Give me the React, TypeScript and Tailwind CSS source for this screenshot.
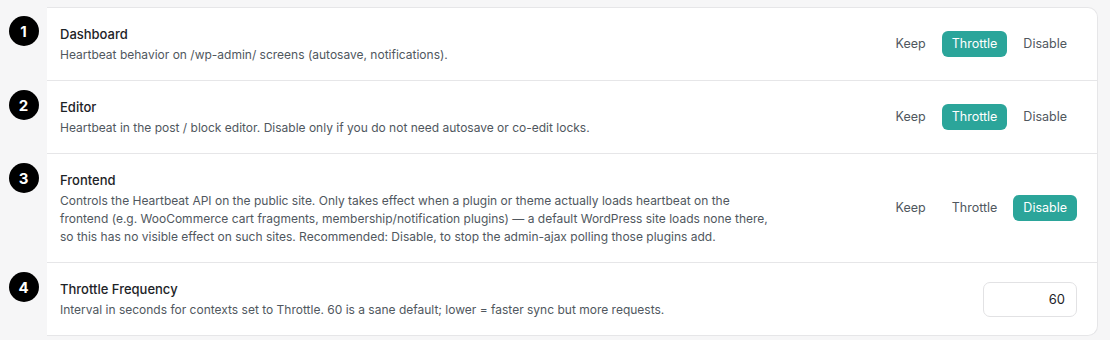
const rows = [
  {
    n: 1,
    title: 'Dashboard',
    desc: 'Heartbeat behavior on /wp-admin/ screens (autosave, notifications).',
    value: 'Throttle',
  },
  {
    n: 2,
    title: 'Editor',
    desc: 'Heartbeat in the post / block editor. Disable only if you do not need autosave or co-edit locks.',
    value: 'Throttle',
  },
  {
    n: 3,
    title: 'Frontend',
    desc: 'Controls the Heartbeat API on the public site. Only takes effect when a plugin or theme actually loads heartbeat on the frontend (e.g. WooCommerce cart fragments, membership/notification plugins) — a default WordPress site loads none there, so this has no visible effect on such sites. Recommended: Disable, to stop the admin-ajax polling those plugins add.',
    value: 'Disable',
  },
];

const options = ['Keep', 'Throttle', 'Disable'];

const Marker: React.FC<{ n: number }> = ({ n }) => (
  <div className="w-[47px] shrink-0 flex justify-center pt-[9px]">
    <div className="w-[30px] h-[30px] rounded-full bg-black text-white flex items-center justify-center text-[15px] font-bold leading-none">
      {n}
    </div>
  </div>
);

const Segmented: React.FC<{ value: string }> = ({ value }) => (
  <div className="flex items-center gap-[6px] shrink-0">
    {options.map((o) => (
      <button
        key={o}
        className={
          o === value
            ? 'h-[26px] px-[10px] rounded-[6px] bg-[#2ba59a] text-white text-[12.5px]'
            : 'h-[26px] px-[10px] rounded-[6px] text-[#50575e] text-[12.5px]'
        }
      >
        {o}
      </button>
    ))}
  </div>
);

export default function App() {
  return (
    <div
      className="w-[1110px] h-[340px] bg-[#f6f6f7] pt-[7px] pr-[12px]"
      style={{ fontFamily: 'Inter, "Noto Sans", sans-serif' }}
    >
      {rows.map((r, i) => (
        <div key={r.n} className="flex">
          <Marker n={r.n} />
          <div
            className={
              'flex-1 flex items-center bg-white border-r border-b border-[#e6e6e8] pl-[13px] pr-[20px] py-[16px] ' +
              (i === 0 ? 'border-t rounded-tr-[10px]' : '')
            }
          >
            <div className="flex-1 min-w-0">
              <div className="text-[13px] leading-[20px] font-medium text-[#1d2327]">{r.title}</div>
              <div className="mt-[2px] max-w-[712px] text-[12px] leading-[18px] text-[#50575e]">{r.desc}</div>
            </div>
            <Segmented value={r.value} />
          </div>
        </div>
      ))}
      <div className="flex">
        <Marker n={4} />
        <div className="flex-1 flex items-center bg-white border-r border-b border-[#e6e6e8] rounded-br-[10px] pl-[13px] pr-[20px] py-[16px]">
          <div className="flex-1 min-w-0">
            <div className="text-[13px] leading-[20px] font-medium text-[#1d2327]">Throttle Frequency</div>
            <div className="mt-[2px] text-[12px] leading-[18px] text-[#50575e]">
              Interval in seconds for contexts set to Throttle. 60 is a sane default; lower = faster sync but more requests.
            </div>
          </div>
          <input
            readOnly
            value="60"
            className="w-[94px] h-[35px] rounded-[7px] border border-[#e2e2e4] text-right pr-[11px] text-[13px] text-[#1d2327] outline-none"
          />
        </div>
      </div>
    </div>
  );
}
